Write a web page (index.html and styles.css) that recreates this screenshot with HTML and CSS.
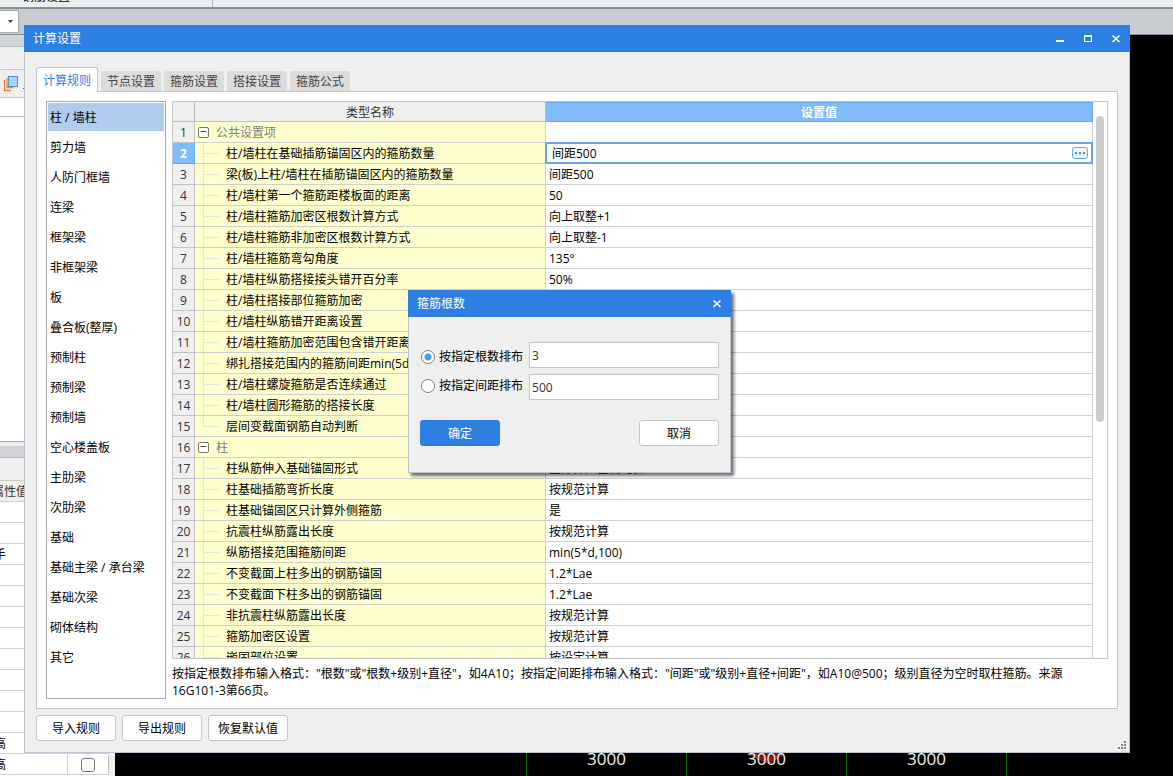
FILE: index.html
```html
<!DOCTYPE html>
<html lang="zh-CN">
<head>
<meta charset="utf-8">
<title>计算设置</title>
<link rel="stylesheet" href="styles.css">
</head>
<body>
<div class="app">
  <div class="ribbon"><span class="ribbon-label">钢筋设置</span></div>
  <div class="toolbar"><button class="combo" aria-label="下拉"><svg width="5" height="3" viewBox="0 0 5 3"><path d="M0 0h5L2.500 3z" fill="#444"/></svg></button></div>
  <div class="workspace">
    <aside class="side">
      <div class="side-title"></div>
      <div class="side-head"></div>
      <div class="side-tools">
        <svg width="22" height="17" viewBox="0 0 22 17"><path d="M.5 5v10.500h6.500M3 3v9.500h6.500" fill="none" stroke="#f08030" stroke-width="1.300"/><rect x="4.500" y="1.500" width="9" height="10" fill="#aad2fc" stroke="#4a90dc"/><path d="M19 13h1v1h-1z" fill="#555"/></svg>
      </div>
      <div class="side-search"></div>
      <div class="side-tree"></div>
      <div class="side-title"></div>
      <div class="side-head"></div>
      <div class="prop-row prop-head">属性值</div>
      <div class="prop-row"></div>
      <div class="prop-row"></div>
      <div class="prop-row">手</div>
      <div class="prop-row"></div>
      <div class="prop-row"></div>
      <div class="prop-row"></div>
      <div class="prop-row"></div>
      <div class="prop-row"></div>
      <div class="prop-row"></div>
      <div class="prop-row"></div>
      <div class="prop-row"></div>
      <div class="prop-row">高</div>
      <div class="prop-row"><span class="prop-value">高</span><span class="prop-check"><input type="checkbox" class="check" aria-label="高"></span></div>
    </aside>
    <main class="canvas">
      <div class="axis">
        <span class="span-size">3000</span>
        <span class="span-size"><svg class="mark" width="34" height="12" viewBox="0 0 34 12"><path d="M0 0h34v3l-5 3-4 2-3 3h-8l-4-3-5-2-5-3z" fill="#8c1414"/></svg>3000</span>
        <span class="span-size">3000</span>
        <span class="span-size"></span>
      </div>
    </main>
  </div>
</div>

<section class="window" aria-label="计算设置">
  <header class="titlebar">
    <h1 class="title">计算设置</h1>
    <button class="winbtn" aria-label="最小化"><svg width="10" height="10" viewBox="0 0 10 10"><path d="M1 6h8v2H1z" fill="#fff"/></svg></button>
    <button class="winbtn" aria-label="最大化"><svg width="10" height="10" viewBox="0 0 10 10"><path d="M1 1h8v7H1zM2 3v4h6V3z" fill="#fff" fill-rule="evenodd"/></svg></button>
    <button class="winbtn" aria-label="关闭"><svg width="10" height="10" viewBox="0 0 10 10"><path d="M1.500 1.500l7 6.500M8.500 1.500l-7 6.500" stroke="#fff" stroke-width="1.600"/></svg></button>
  </header>
  <div class="window-body">
    <div class="tabs" role="tablist">
      <button class="tab tab-active" role="tab" aria-selected="true">计算规则</button>
      <button class="tab" role="tab">节点设置</button>
      <button class="tab" role="tab">箍筋设置</button>
      <button class="tab" role="tab">搭接设置</button>
      <button class="tab" role="tab">箍筋公式</button>
    </div>
    <div class="panel">
      <ul class="types">
        <li class="type type-active">柱 / 墙柱</li>
        <li class="type">剪力墙</li>
        <li class="type">人防门框墙</li>
        <li class="type">连梁</li>
        <li class="type">框架梁</li>
        <li class="type">非框架梁</li>
        <li class="type">板</li>
        <li class="type">叠合板(整厚)</li>
        <li class="type">预制柱</li>
        <li class="type">预制梁</li>
        <li class="type">预制墙</li>
        <li class="type">空心楼盖板</li>
        <li class="type">主肋梁</li>
        <li class="type">次肋梁</li>
        <li class="type">基础</li>
        <li class="type">基础主梁 / 承台梁</li>
        <li class="type">基础次梁</li>
        <li class="type">砌体结构</li>
        <li class="type">其它</li>
      </ul>
      <div class="detail">
        <div class="grid">
          <div class="grid-view">
            <table class="rules">
              <colgroup><col class="col-no"><col class="col-name"><col></colgroup>
              <thead><tr><th class="corner"></th><th class="head">类型名称</th><th class="head head-active">设置值</th></tr></thead>
              <tbody>
                <tr><th class="no">1</th><td class="group"><button class="fold" aria-label="折叠">−</button>公共设置项</td><td class="val"></td></tr>
                <tr><th class="no no-active">2</th><td class="name">柱/墙柱在基础插筋锚固区内的箍筋数量</td><td class="val val-edit"><div class="editor"><input class="editor-input" type="text" value="间距500" aria-label="柱/墙柱在基础插筋锚固区内的箍筋数量"><button class="more" aria-label="更多"><svg width="16" height="12" viewBox="0 0 16 12"><rect x=".5" y=".5" width="15" height="11" rx="2" fill="#f0f5fb" stroke="#62a8e4"/><path d="M3 5h2v2H3zM7 5h2v2H7zM11 5h2v2h-2z" fill="#4292d8"/></svg></button></div></td></tr>
                <tr><th class="no">3</th><td class="name">梁(板)上柱/墙柱在插筋锚固区内的箍筋数量</td><td class="val">间距500</td></tr>
                <tr><th class="no">4</th><td class="name">柱/墙柱第一个箍筋距楼板面的距离</td><td class="val">50</td></tr>
                <tr><th class="no">5</th><td class="name">柱/墙柱箍筋加密区根数计算方式</td><td class="val">向上取整+1</td></tr>
                <tr><th class="no">6</th><td class="name">柱/墙柱箍筋非加密区根数计算方式</td><td class="val">向上取整-1</td></tr>
                <tr><th class="no">7</th><td class="name">柱/墙柱箍筋弯勾角度</td><td class="val">135°</td></tr>
                <tr><th class="no">8</th><td class="name">柱/墙柱纵筋搭接接头错开百分率</td><td class="val">50%</td></tr>
                <tr><th class="no">9</th><td class="name">柱/墙柱搭接部位箍筋加密</td><td class="val"></td></tr>
                <tr><th class="no">10</th><td class="name">柱/墙柱纵筋错开距离设置</td><td class="val"></td></tr>
                <tr><th class="no">11</th><td class="name">柱/墙柱箍筋加密范围包含错开距离</td><td class="val"></td></tr>
                <tr><th class="no">12</th><td class="name">绑扎搭接范围内的箍筋间距min(5d,100)</td><td class="val"></td></tr>
                <tr><th class="no">13</th><td class="name">柱/墙柱螺旋箍筋是否连续通过</td><td class="val"></td></tr>
                <tr><th class="no">14</th><td class="name">柱/墙柱圆形箍筋的搭接长度</td><td class="val"></td></tr>
                <tr><th class="no">15</th><td class="name name-last">层间变截面钢筋自动判断</td><td class="val"></td></tr>
                <tr><th class="no">16</th><td class="group"><button class="fold" aria-label="折叠">−</button>柱</td><td class="val"></td></tr>
                <tr><th class="no">17</th><td class="name">柱纵筋伸入基础锚固形式</td><td class="val">全部伸入基底弯折</td></tr>
                <tr><th class="no">18</th><td class="name">柱基础插筋弯折长度</td><td class="val">按规范计算</td></tr>
                <tr><th class="no">19</th><td class="name">柱基础锚固区只计算外侧箍筋</td><td class="val">是</td></tr>
                <tr><th class="no">20</th><td class="name">抗震柱纵筋露出长度</td><td class="val">按规范计算</td></tr>
                <tr><th class="no">21</th><td class="name">纵筋搭接范围箍筋间距</td><td class="val">min(5*d,100)</td></tr>
                <tr><th class="no">22</th><td class="name">不变截面上柱多出的钢筋锚固</td><td class="val">1.2*Lae</td></tr>
                <tr><th class="no">23</th><td class="name">不变截面下柱多出的钢筋锚固</td><td class="val">1.2*Lae</td></tr>
                <tr><th class="no">24</th><td class="name">非抗震柱纵筋露出长度</td><td class="val">按规范计算</td></tr>
                <tr><th class="no">25</th><td class="name">箍筋加密区设置</td><td class="val">按规范计算</td></tr>
                <tr><th class="no">26</th><td class="name">嵌固部位设置</td><td class="val">按设定计算</td></tr>
              </tbody>
            </table>
          </div>
          <div class="scroll"><div class="thumb"></div></div>
        </div>
        <p class="note">按指定根数排布输入格式："根数"或"根数+级别+直径"，如4A10；按指定间距排布输入格式："间距"或"级别+直径+间距"，如A10@500；级别直径为空时取柱箍筋。来源16G101-3第66页。</p>
      </div>
    </div>
    <footer class="footer">
      <button class="btn">导入规则</button>
      <button class="btn">导出规则</button>
      <button class="btn">恢复默认值</button>
    </footer>
  </div>
  <svg class="grip" width="8" height="8" viewBox="0 0 8 8"><path d="M6 0h2v2H6zM3 3h2v2H3zM6 3h2v2H6zM0 6h2v2H0zM3 6h2v2H3zM6 6h2v2H6z" fill="#7c828c"/></svg>
</section>

<section class="dialog" role="dialog" aria-label="箍筋根数">
  <header class="titlebar">
    <h2 class="title">箍筋根数</h2>
    <button class="winbtn" aria-label="关闭"><svg width="10" height="10" viewBox="0 0 10 10"><path d="M1.500 1.500l7 6.500M8.500 1.500l-7 6.500" stroke="#fff" stroke-width="1.600"/></svg></button>
  </header>
  <form class="dialog-body">
    <div class="fields">
      <div class="choices">
        <label class="choice"><input class="radio" type="radio" name="mode" checked>按指定根数排布</label>
        <label class="choice"><input class="radio" type="radio" name="mode">按指定间距排布</label>
      </div>
      <div class="inputs">
        <input class="text" type="text" value="3" aria-label="根数">
        <input class="text" type="text" value="500" aria-label="间距">
      </div>
    </div>
    <div class="actions"><button type="button" class="btn btn-primary">确定</button><button type="button" class="btn">取消</button></div>
  </form>
</section>
</body>
</html>
```
FILE: styles.css
```css
* { box-sizing: border-box; }
html, body { height: 100%; }
body {
  margin: 0;
  overflow: hidden;
  font: 12px/20px "Open Sans", "Noto Sans CJK SC", sans-serif;
  color: #000;
  background: #000;
}
button, input { font: inherit; color: inherit; margin: 0; padding: 0; }
button { border: 0; background: none; }
svg { display: block; }

/* application behind the windows */
.app { display: flex; flex-direction: column; height: 100%; overflow: hidden; }
.ribbon {
  display: flex;
  align-items: flex-end;
  flex: none;
  height: 9px;
  padding-left: 22px;
  overflow: hidden;
  background: #e9eeee;
  border-bottom: 2px solid #8b9194;
}
.ribbon-label { width: 191px; border-right: 1px solid #b4babc; }
.toolbar { flex: none; height: 26px; padding-top: 1px; background: #c9ccd1; border-bottom: 1px solid #858c96; }
.combo {
  display: flex;
  align-items: center;
  justify-content: flex-end;
  width: 19px;
  height: 23px;
  padding-right: 5px;
  background: #fff;
  border: 1px solid #a4a7ac;
  border-left: 0;
}
.workspace { display: flex; flex: 1; min-height: 0; }
.side { display: flex; flex-direction: column; width: 115px; background: #fff; border-right: 6px solid #efefef; }
.side-title { flex: none; height: 12px; background: #d2d3d9; border-bottom: 1px solid #b9bbc1; }
.side-head { flex: none; height: 23px; background: #efefef; border-bottom: 1px solid #c9c9c9; }
.side-tools { flex: none; height: 28px; padding: 5px 4px; background: #efefef; border-bottom: 1px solid #c3c3c3; }
.side-search { flex: none; height: 19px; border-bottom: 1px solid #c3c3c3; }
.side-tree { flex: none; height: 329px; border-bottom: 4px solid #efefef; box-shadow: inset 0 -1px #aaa; }
.prop-row { display: flex; flex: none; height: 21px; padding-top: 1px; border-bottom: 1px solid #cfcfcf; text-indent: -6px; overflow: hidden; }
.prop-head { background: #f1efe9; text-indent: -8px; color: #333; }
.prop-value { width: 68px; margin-top: -1px; padding-top: 1px; border-right: 1px solid #cfcfcf; }
.prop-check { display: flex; flex: 1; align-items: center; justify-content: center; border-right: 1px solid #b9b9b9; }
.check { appearance: none; width: 14px; height: 14px; border: 1px solid #777; border-radius: 3px; background: #fff; }
.canvas { display: flex; flex: 1; align-items: flex-end; min-width: 0; background: #000; overflow: hidden; }
.axis { display: flex; padding-left: 411px; }
.span-size {
  position: relative;
  z-index: 0;
  width: 160px;
  height: 26px;
  border-left: 1px solid #00640a;
  color: #f2f2f2;
  font-size: 17px;
  line-height: 18px;
  text-align: center;
}
.mark { position: absolute; left: 63px; top: 2px; z-index: -1; }

/* windows */
.window {
  position: absolute;
  inset: 25px 43px 23px 24px;
  display: flex;
  flex-direction: column;
  background: #efefef;
}
.titlebar { display: flex; flex: none; align-items: center; height: 27px; padding: 0 5px 0 9px; background: #2d7fe2; color: #fff; }
.title { flex: 1; margin: 0; font-size: 12px; font-weight: 400; }
.winbtn { display: flex; align-items: center; justify-content: center; width: 18px; height: 20px; margin-left: 10px; }
.window-body {
  display: flex;
  flex: 1;
  flex-direction: column;
  min-height: 0;
  padding: 15px 11px 11px;
  border: 1px solid #bcc3d2;
  border-top: 0;
}
.tabs { display: flex; flex: none; align-items: flex-end; gap: 3px; height: 24px; }
.tab { width: 60px; height: 20px; padding-top: 2px; line-height: 18px; background: #dcdcdc; border-radius: 3px 3px 0 0; color: #444; }
.tab-active {
  position: relative;
  width: 62px;
  height: 25px;
  margin-bottom: -1px;
  background: #fff;
  border: 1px solid #c3c5c9;
  border-bottom: 0;
  color: #2d7fe2;
}
.panel { display: flex; flex: 1; gap: 6px; min-height: 0; padding: 9px; background: #fff; border: 1px solid #c3c5c9; }
.types { flex: none; width: 120px; margin: 0; padding: 1px; border: 1px solid #a9a9a9; list-style: none; overflow: hidden; }
.type { height: 28px; margin-bottom: 2px; padding: 2px 0 0 2px; line-height: 26px; }
.type-active { background: #b1ccee; }
.detail { display: flex; flex: 1; flex-direction: column; min-width: 0; }
.grid { display: flex; flex: 1; min-height: 0; border: 1px solid #c3c3c3; }
.grid-view { flex: 1; min-width: 0; overflow: hidden; }
.scroll { flex: none; width: 14px; padding: 14px 3px 0; }
.thumb { height: 306px; border-radius: 4px; background: #cdcdcd; }
.note { flex: none; margin: 6px 0 0; line-height: 17px; min-height: 34px; }

.rules { width: 100%; table-layout: fixed; border-collapse: separate; border-spacing: 0; }
.col-no { width: 22px; }
.col-name { width: 351px; }
.rules th, .rules td {
  height: 21px;
  padding: 2px 0 0;
  border: 0 solid #cfcfcf;
  border-width: 0 1px 1px 0;
  font-weight: 400;
  line-height: 18px;
  white-space: nowrap;
  overflow: hidden;
}
.rules .corner, .rules .head { height: 20px; line-height: 17px; background: #efefef; border-color: #bfbfbf; color: #333; }
.rules .head-active { background: #80bbfa; border-color: #68a8e6; color: #fff; font-weight: 700; box-shadow: inset 0 1px #68a8e6; }
.rules .no { background: #efefef; border-color: #c3c3c3; color: #333; }
.rules .no-active { background: #80bbfa; color: #fff; font-weight: 700; border-color: #68a8e6; }
.rules .name {
  padding-left: 31px;
  background:
    linear-gradient(#e4e4e4, #e4e4e4) 8px 10px / 16px 1px no-repeat,
    linear-gradient(#e4e4e4, #e4e4e4) 8px 0 / 1px 100% no-repeat,
    #ffffce;
}
.rules .name-last {
  background:
    linear-gradient(#e4e4e4, #e4e4e4) 8px 10px / 16px 1px no-repeat,
    linear-gradient(#e4e4e4, #e4e4e4) 8px 0 / 1px 10px no-repeat,
    #ffffce;
}
.rules .group { background: #ffffce; color: #808080; }
.fold {
  width: 11px;
  height: 11px;
  margin: 0 7px 0 3px;
  border: 1px solid #777;
  border-radius: 2px;
  background: #fff;
  color: #222;
  line-height: 8px;
  vertical-align: 1px;
}
.rules .val { padding-left: 3px; background: #fff; }
.rules .val-edit { padding: 0; overflow: visible; }
.editor { position: relative; display: flex; align-items: center; height: 22px; margin: -1px; padding: 0 3px 0 5px; border: 2px solid #68a8e6; background: #fff; }
.editor-input { flex: 1; min-width: 0; height: 18px; padding-top: 2px; border: 0; outline: 0; background: none; }

.footer { display: flex; flex: none; gap: 6px; padding-top: 6px; }
.btn { width: 80px; height: 26px; padding-top: 2px; background: #fff; border: 1px solid #c6c6c6; border-radius: 3px; }
.btn-primary { background: #2d7fe2; border-color: #2d7fe2; color: #fff; }
.grip { position: absolute; right: 4px; bottom: 4px; }

.dialog { position: absolute; left: 408px; top: 290px; width: 323px; box-shadow: 3px 3px 3px rgba(0, 0, 0, .55); }
.dialog-body { padding: 25px 11px 26px; background: #efefef; border: 1px solid #bcc3d2; border-top: 0; }
.fields { display: flex; align-items: center; gap: 6px; }
.choices { display: flex; flex: none; flex-direction: column; gap: 9px; padding-left: 1px; }
.choice { display: flex; align-items: center; gap: 4px; }
.inputs { display: flex; flex: 1; flex-direction: column; gap: 6px; min-width: 0; }
.radio { appearance: none; width: 14px; height: 14px; border: 1px solid #808080; border-radius: 50%; background: #fff; }
.radio:checked { background: radial-gradient(circle, #4a9cf8 3px, #fff 4px); }
.text { width: 100%; height: 26px; padding: 0 2px; border: 1px solid #c3c5cb; background: #fff; color: #333; outline: 0; }
.actions { display: flex; justify-content: space-between; padding-top: 20px; }
```
